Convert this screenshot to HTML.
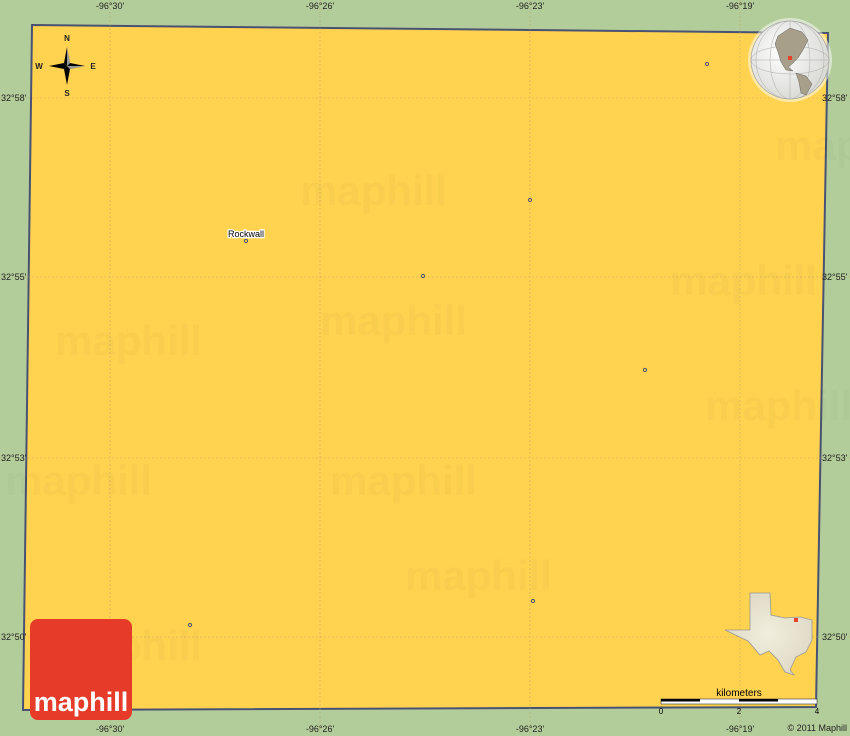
<!DOCTYPE html>
<html><head><meta charset="utf-8"><style>
body{margin:0;width:850px;height:736px;overflow:hidden;background:#b3cd9a;font-family:"Liberation Sans",sans-serif}
svg{position:absolute;left:0;top:0}
.wm{fill:#000;opacity:0.018;font-weight:bold;font-size:42px}
.lbl{font-size:9px;fill:#222}
</style></head><body>
<svg width="850" height="736" viewBox="0 0 850 736">
<defs>
<radialGradient id="g" cx="0.4" cy="0.4" r="0.7"><stop offset="0" stop-color="#fff"/><stop offset="1" stop-color="#d4d4d0"/></radialGradient>
<radialGradient id="tx" cx="0.5" cy="0.5" r="0.6"><stop offset="0" stop-color="#f2eedd"/><stop offset="1" stop-color="#dcd8c4"/></radialGradient>
</defs>
<polygon points="32,25 828,33 816,707 23,710" fill="#ffd24f" stroke="#4a5274" stroke-width="2"/>
<g stroke="#b7a56a" stroke-width="0.6" stroke-dasharray="2,2" fill="none" opacity="0.8">
<line x1="110" y1="0" x2="110" y2="736"/><line x1="320" y1="0" x2="320" y2="736"/>
<line x1="530" y1="0" x2="530" y2="736"/><line x1="740" y1="0" x2="740" y2="736"/>
<line x1="0" y1="98" x2="850" y2="98"/><line x1="0" y1="277" x2="850" y2="277"/>
<line x1="0" y1="458" x2="850" y2="458"/><line x1="0" y1="637" x2="850" y2="637"/>
</g>
<g class="wm">
<text x="300" y="205">maphill</text><text x="775" y="160">map</text><text x="670" y="295">maphill</text>
<text x="320" y="335">maphill</text><text x="55" y="355">maphill</text><text x="705" y="420">maphill</text>
<text x="5" y="495">maphill</text><text x="330" y="495">maphill</text><text x="405" y="590">maphill</text>
<text x="55" y="660">maphill</text>
</g>
<g class="lbl" text-anchor="middle">
<text x="110" y="9">-96°30'</text><text x="320" y="9">-96°26'</text><text x="530" y="9">-96°23'</text><text x="740" y="9">-96°19'</text>
<text x="110" y="732">-96°30'</text><text x="320" y="732">-96°26'</text><text x="530" y="732">-96°23'</text><text x="740" y="732">-96°19'</text>
</g>
<g class="lbl">
<text x="1" y="101">32°58'</text><text x="1" y="280">32°55'</text><text x="1" y="461">32°53'</text><text x="1" y="640">32°50'</text>
<text x="822" y="101">32°58'</text><text x="822" y="280">32°55'</text><text x="822" y="461">32°53'</text><text x="822" y="640">32°50'</text>
</g>
<g fill="#ffd24f" stroke="#4a5274" stroke-width="1">
<circle cx="707" cy="64" r="1.6"/><circle cx="530" cy="200" r="1.6"/><circle cx="246" cy="241" r="1.6"/>
<circle cx="423" cy="276" r="1.6"/><circle cx="645" cy="370" r="1.6"/><circle cx="533" cy="601" r="1.6"/><circle cx="190" cy="625" r="1.6"/>
</g>
<text x="246" y="237" font-size="9" text-anchor="middle" fill="#000" stroke="#fff" stroke-width="2.5" paint-order="stroke">Rockwall</text>
<g>
<polygon points="67,47 70,63 67,66 64,63" fill="#000"/><polygon points="67,85 70,69 67,66 64,69" fill="#000"/>
<polygon points="49,66 64,63 67,66 64,69" fill="#000"/><polygon points="85,66 70,63 67,66 70,69" fill="#000"/>
<polygon points="67,47 67,66 70,63" fill="#fff" opacity=".6"/><polygon points="85,66 67,66 70,69" fill="#fff" opacity=".6"/>
<g font-size="8" font-weight="bold" fill="#222" text-anchor="middle">
<text x="67" y="41">N</text><text x="67" y="96">S</text><text x="39" y="69">W</text><text x="93" y="69">E</text></g>
</g>
<circle cx="790" cy="60" r="42" fill="#fff" opacity=".5"/>
<circle cx="790" cy="60" r="39" fill="url(#g)" stroke="#999" stroke-width="0.6"/>
<g stroke="#aaa" stroke-width="0.5" fill="none">
<ellipse cx="790" cy="60" rx="20" ry="39"/><ellipse cx="790" cy="60" rx="34" ry="39"/><line x1="790" y1="21" x2="790" y2="99"/>
<ellipse cx="790" cy="60" rx="39" ry="14"/><line x1="751" y1="60" x2="829" y2="60"/>
</g>
<path d="M778,36 L790,28 L802,32 L808,40 L803,50 L798,58 L792,64 L788,67 L793,71 L786,70 L781,62 L778,52 L775,44 Z" fill="#a89f8a" stroke="#666" stroke-width="0.5"/>
<path d="M796,73 L806,76 L812,84 L806,95 L801,93 L799,82 Z" fill="#a89f8a" stroke="#666" stroke-width="0.5"/>
<rect x="788" y="56" width="4" height="4" fill="#e8432a"/>
<path d="M750,593 L770,593 L771,615 L785,618 L800,617 L812,620 L812,640 L806,652 L796,657 L790,670 L794,675 L785,672 L778,660 L769,651 L760,655 L748,641 L725,630 L750,630 Z" fill="url(#tx)" stroke="#999" stroke-width="0.8"/>
<rect x="794" y="618" width="4" height="4" fill="#e8432a"/>
<text x="739" y="696" font-size="10" fill="#000" text-anchor="middle">kilometers</text>
<rect x="661" y="699" width="156" height="5" fill="#fff" stroke="#333" stroke-width="0.6"/>
<rect x="661" y="699" width="39" height="2.5" fill="#000"/><rect x="739" y="699" width="39" height="2.5" fill="#000"/>
<g font-size="8" fill="#000" text-anchor="middle"><text x="661" y="714">0</text><text x="739" y="714">2</text><text x="817" y="714">4</text></g>
<text x="847" y="731" font-size="9" fill="#222" text-anchor="end">© 2011 Maphill</text>
<rect x="30" y="619" width="102" height="101" rx="8" fill="#e63b28"/>
<text x="81" y="711" font-size="27" font-weight="bold" fill="#fff" text-anchor="middle">maphill</text>
</svg>
</body></html>
